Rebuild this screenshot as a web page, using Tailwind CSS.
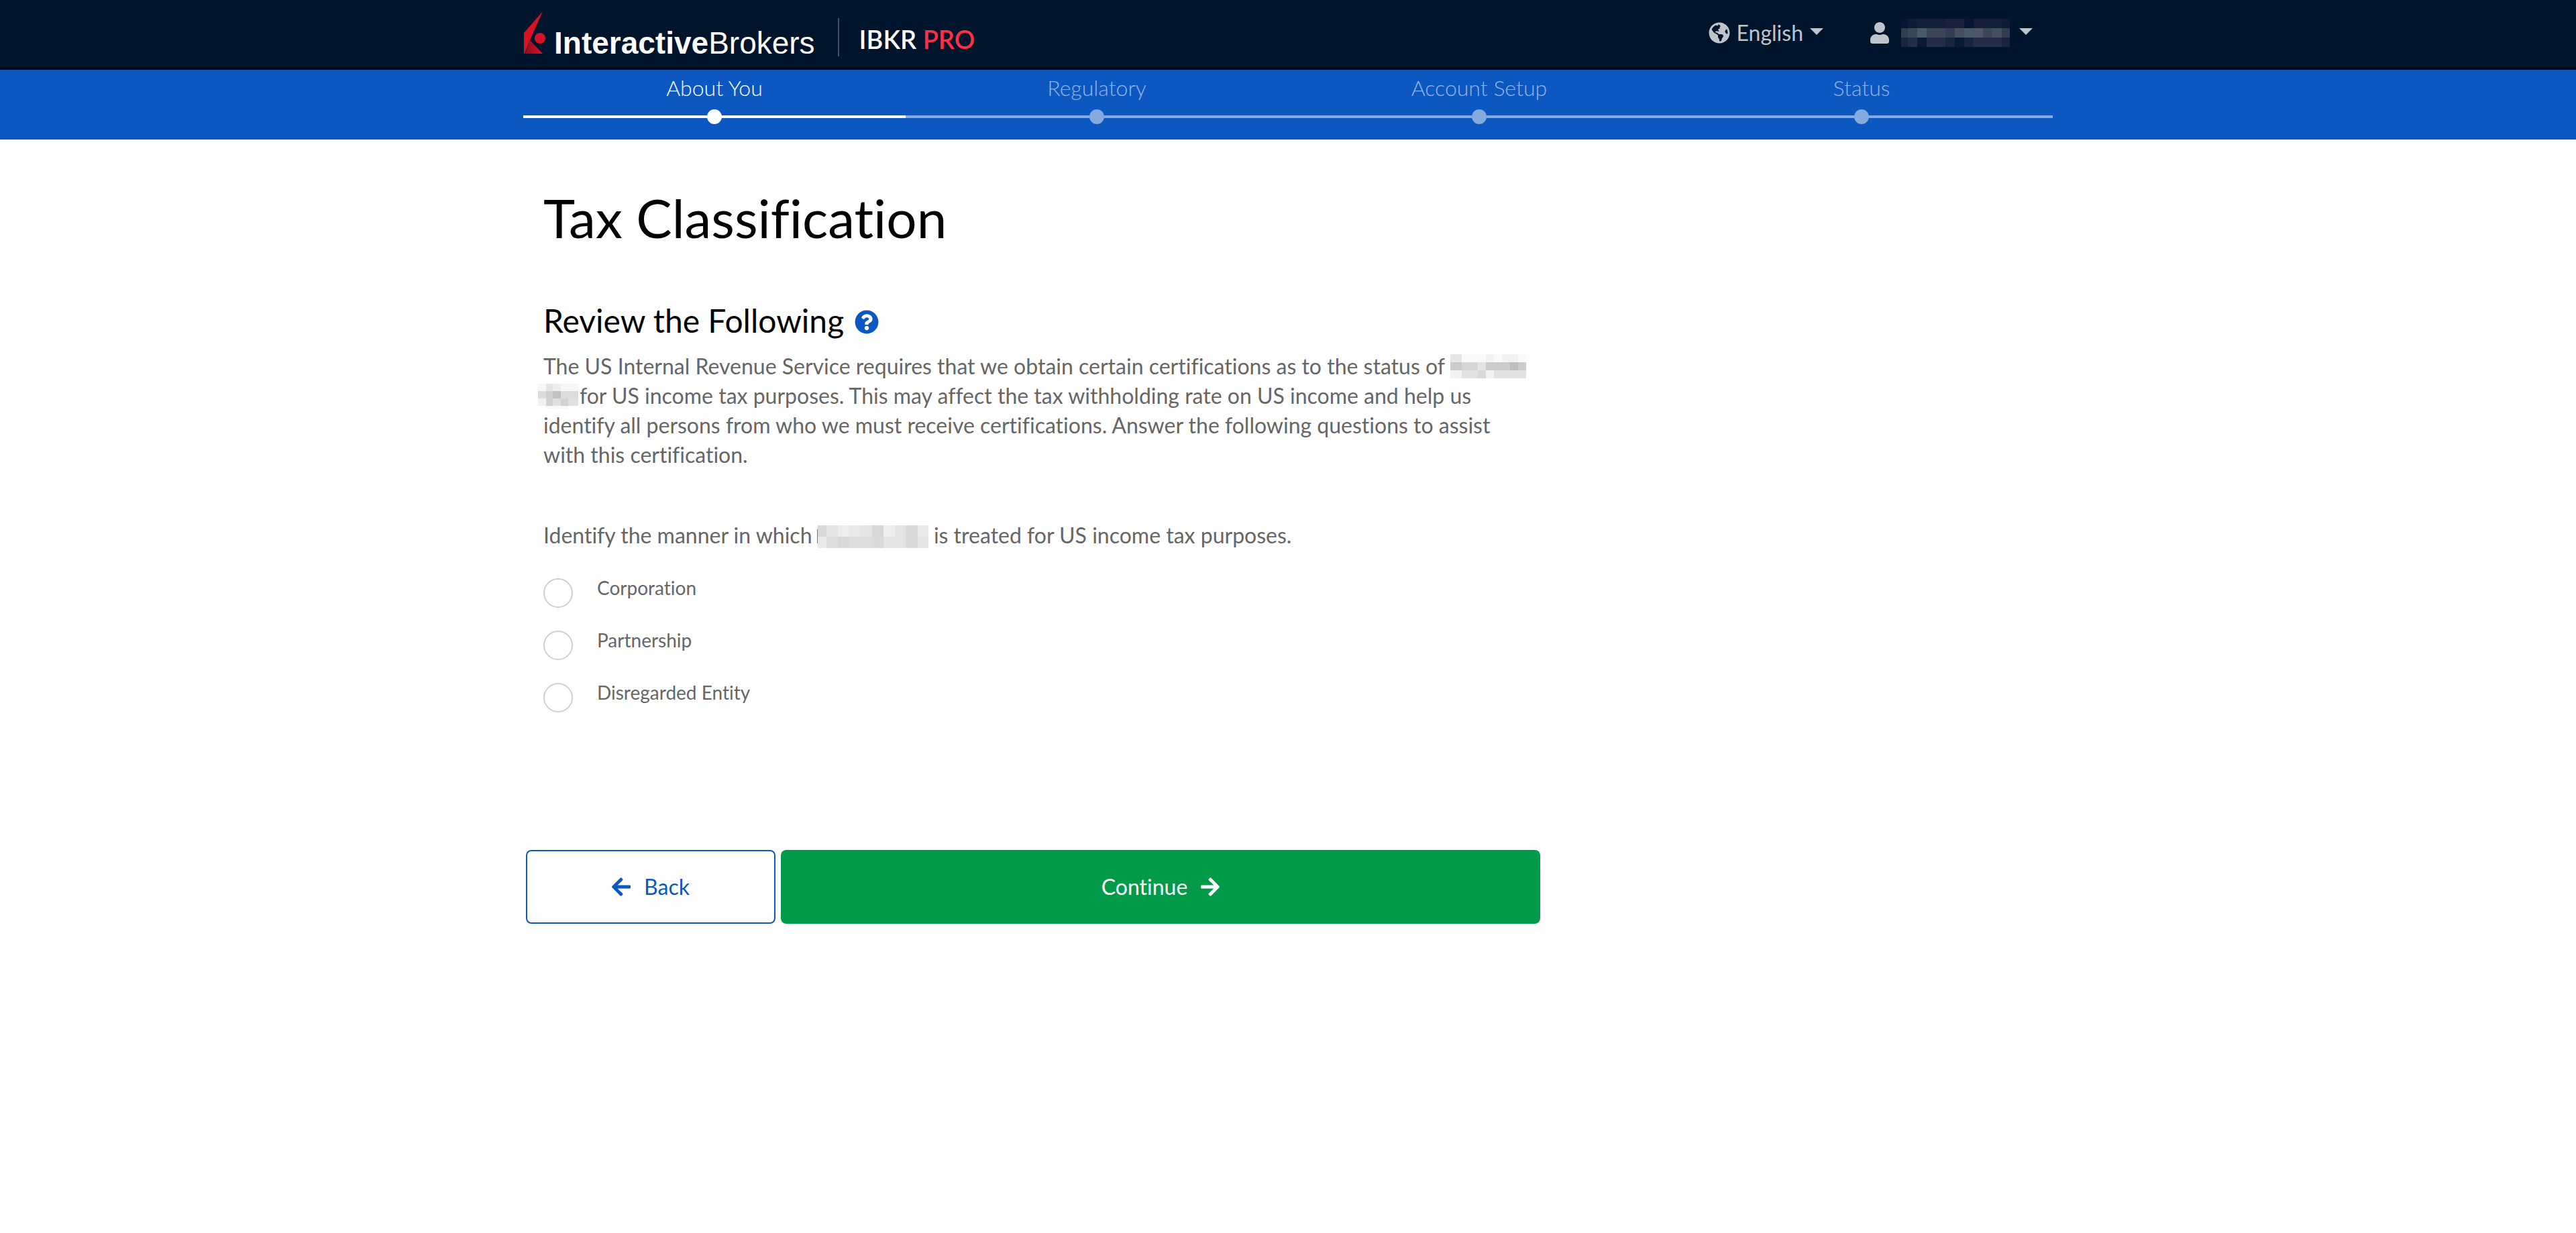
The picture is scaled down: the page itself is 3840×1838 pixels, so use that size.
<!DOCTYPE html>
<html lang="en">
<head>
<meta charset="utf-8">
<meta name="viewport" content="width=device-width, initial-scale=1">
<title>Tax Classification</title>
<script src="https://cdn.jsdelivr.net/npm/@tailwindcss/browser@4"></script>
</head>
<body class="min-h-screen bg-white font-['Lato',sans-serif] text-[32px] leading-[44px] text-[#666666] [font-variant-ligatures:none]">

<header class="border-b-2 border-black bg-[#00142b]">
  <div class="mx-auto flex h-[102px] w-full max-w-[2280px] items-start justify-between pr-[30px]">
    <div class="flex">
      <a href="#" aria-label="Interactive Brokers" class="flex items-baseline gap-3 pt-[17px] font-['Liberation_Sans',sans-serif] text-[46px] leading-[52px] text-white">
        <svg class="h-[63px] w-[34px]" viewBox="0 0 34 63" aria-hidden="true">
          <defs>
            <linearGradient id="fold" x1="0" y1="0" x2="1" y2="0">
              <stop offset="0" stop-color="#8e0f1c"/><stop offset="1" stop-color="#d81222"/>
            </linearGradient>
          </defs>
          <path d="M29 0 10 43 2 63H1V32z" fill="#d81222"/>
          <path d="M10 43 29 63H3z" fill="url(#fold)"/>
          <circle cx="25" cy="40" r="8" fill="#d81222"/>
        </svg>
        <span><b class="font-bold">Interactive</b>Brokers</span>
      </a>
      <div class="mt-[27px] ml-[34px] h-[57px] border-l-2 border-[#475160]"></div>
      <div class="ml-[30px] pt-[34px] text-[38px] leading-[48px] font-semibold text-white">IBKR <span class="text-[#ff2f43]">PRO</span></div>
    </div>
    <nav class="flex h-[98px] items-center gap-[70px] text-[#bfc3ca]">
      <button type="button" aria-haspopup="true" class="flex items-center leading-10">
        <svg class="mr-[10px] h-8 w-8" viewBox="0 0 496 512" fill="currentColor" aria-hidden="true"><path d="M248 8C111.03 8 0 119.03 0 256s111.03 248 248 248 248-111.03 248-248S384.97 8 248 8zm82.29 357.6c-3.9 3.88-7.99 7.95-11.31 11.28-2.99 3-5.1 6.7-6.17 10.71-1.51 5.66-2.73 11.38-4.77 16.87l-17.39 46.85c-13.76 3-28 4.69-42.65 4.69v-27.38c1.69-12.62-7.64-36.26-22.63-51.25-6-6-9.37-14.14-9.37-22.63v-32.01c0-11.64-6.27-22.34-16.46-27.97-14.37-7.95-34.81-19.06-48.81-26.11-11.48-5.78-22.1-13.14-31.65-21.75l-.8-.72a114.792 114.792 0 0 1-18.06-20.74c-9.38-13.77-24.66-36.42-34.59-51.14 20.47-45.5 57.36-82.04 103.2-101.89l24.01 12.01C203.48 89.74 216 82.01 216 70.11v-11.3c7.99-1.29 16.12-2.11 24.39-2.42l28.3 28.3c6.25 6.25 6.25 16.38 0 22.63L264 112l-10.34 10.34c-3.12 3.12-3.12 8.19 0 11.31l4.69 4.69c3.12 3.12 3.12 8.19 0 11.31l-8 8a8.008 8.008 0 0 1-5.66 2.34h-8.99c-2.08 0-4.08.81-5.58 2.27l-9.92 9.65a8.001 8.001 0 0 0-1.58 9.31l15.59 31.19c2.66 5.32-1.21 11.58-7.15 11.58h-5.64c-1.93 0-3.79-.7-5.24-1.96l-9.28-8.06a16.017 16.017 0 0 0-15.55-3.1l-31.17 10.39a11.95 11.95 0 0 0-8.17 11.34c0 4.53 2.56 8.66 6.61 10.69l11.08 5.54c9.41 4.71 19.79 7.16 30.31 7.16s22.59 27.29 32 32h66.75c8.49 0 16.62 3.37 22.63 9.37l13.69 13.69a30.503 30.503 0 0 1 8.93 21.57 46.536 46.536 0 0 1-13.72 32.98zM417 274.25c-5.79-1.45-10.84-5-14.15-9.97l-17.98-26.97a23.97 23.97 0 0 1 0-26.62l19.59-29.38c2.32-3.47 5.5-6.29 9.24-8.15l12.98-6.49C440.2 193.59 448 223.87 448 256c0 8.67-.74 17.16-1.82 25.54L417 274.25z"/></svg>
        <span>English</span>
        <svg class="mb-1 ml-[10px] h-[10px] w-5" viewBox="0 0 20 10" fill="currentColor" aria-hidden="true"><path d="M0 0h20L10 10z"/></svg>
      </button>
      <button type="button" aria-haspopup="true" aria-label="Account" class="flex items-center">
        <svg class="mr-[18px] h-8 w-7" viewBox="0 0 448 512" fill="currentColor" aria-hidden="true"><path d="M224 256c70.7 0 128-57.3 128-128S294.7 0 224 0 96 57.3 96 128s57.3 128 128 128zm89.6 32h-16.7c-22.2 10.2-46.9 16-72.9 16s-50.6-5.8-72.9-16h-16.7C60.2 288 0 348.2 0 422.4V464c0 26.5 21.5 48 48 48h352c26.5 0 48-21.5 48-48v-41.6c0-74.2-60.2-134.4-134.4-134.4z"/></svg>
        <svg class="h-[42px] w-[162px]" viewBox="0 0 162 42" shape-rendering="crispEdges" aria-hidden="true">
          <path fill="#0d1b35" d="M0 0h162v14H0z"/>
          <path fill="#131f39" d="M24 0h42v14H24zM136 0h14v14h-14zM108 0h28v14h-28z"/>
          <path fill="#18223d" d="M66 0h28v14H66z"/>
          <path fill="#0a1631" d="M94 0h14v14H94zM0 0h10v14H0z"/>
          <path fill="#3c4658" d="M0 14h162v14H0z"/>
          <path fill="#323d54" d="M0 14h10v14H0zM66 14h14v14H66zM150 14h12v14h-12z"/>
          <path fill="#4b586b" d="M24 14h14v14H24zM94 14h28v14H94z"/>
          <path fill="#444f60" d="M80 14h14v14H80zM136 14h14v14h-14z"/>
          <path fill="#19243e" d="M0 28h162v14H0z"/>
          <path fill="#222d45" d="M10 28h14v14H10zM38 28h28v14H38zM108 28h42v14h-42z"/>
          <path fill="#0b1a33" d="M24 28h14v14H24zM80 28h14v14H80z"/>
        </svg>
        <svg class="mb-1 ml-[14px] h-[10px] w-5" viewBox="0 0 20 10" fill="currentColor" aria-hidden="true"><path d="M0 0h20L10 10z"/></svg>
      </button>
    </nav>
  </div>
</header>

<div class="bg-[#0c57c0]">
  <ol class="mx-auto grid h-[104px] w-full max-w-[2280px] grid-cols-4 pt-[7px] text-center leading-10 font-light text-[#94b5e4]">
    <li class="text-white" aria-current="step">
      <span>About You</span>
      <div class="mt-3 flex items-center"><i class="h-1 flex-1 bg-white"></i><i class="size-[22px] rounded-full bg-white"></i><i class="h-1 flex-1 bg-white"></i></div>
    </li>
    <li>
      <span>Regulatory</span>
      <div class="mt-3 flex items-center"><i class="h-1 flex-1 bg-[#85aadf]"></i><i class="size-[22px] rounded-full bg-[#85aadf]"></i><i class="h-1 flex-1 bg-[#85aadf]"></i></div>
    </li>
    <li>
      <span>Account Setup</span>
      <div class="mt-3 flex items-center"><i class="h-1 flex-1 bg-[#85aadf]"></i><i class="size-[22px] rounded-full bg-[#85aadf]"></i><i class="h-1 flex-1 bg-[#85aadf]"></i></div>
    </li>
    <li>
      <span>Status</span>
      <div class="mt-3 flex items-center"><i class="h-1 flex-1 bg-[#85aadf]"></i><i class="size-[22px] rounded-full bg-[#85aadf]"></i><i class="h-1 flex-1 bg-[#85aadf]"></i></div>
    </li>
  </ol>
</div>

<main class="mx-auto w-full max-w-[2280px]">
  <form class="max-w-[1520px]">
    <div class="px-[30px] pt-[68px]">
      <h1 class="text-[80px] leading-[96px] text-black">Tax Classification</h1>
      <div class="mt-[77px] flex items-center gap-4">
        <h2 class="text-5xl leading-[58px] text-black">Review the Following</h2>
        <button type="button" aria-label="Help" class="text-[#0c57c0]">
          <svg class="mt-1 size-9" viewBox="0 0 512 512" fill="currentColor" aria-hidden="true"><path d="M504 256c0 136.997-111.043 248-248 248S8 392.997 8 256C8 119.083 119.043 8 256 8s248 111.083 248 248zM262.655 90c-54.497 0-89.255 22.957-116.549 63.758-3.536 5.286-2.353 12.415 2.715 16.258l34.699 26.31c5.205 3.947 12.621 3.008 16.665-2.122 17.864-22.658 30.113-35.797 57.303-35.797 20.429 0 45.698 13.148 45.698 32.958 0 14.976-12.363 22.667-32.534 33.976C247.128 238.528 216 254.941 216 296v4c0 6.627 5.373 12 12 12h56c6.627 0 12-5.373 12-12v-1.333c0-28.462 83.186-29.647 83.186-106.667 0-58.002-60.165-102-116.531-102zM256 338c-25.365 0-46 20.635-46 46 0 25.364 20.635 46 46 46s46-20.636 46-46c0-25.365-20.635-46-46-46z"/></svg>
        </button>
      </div>
      <p class="mt-[17px] -mr-[20px]">The US Internal Revenue Service requires that we obtain certain certifications as to the status of
        <svg class="inline-block h-9 w-[113px] align-[-6px]" viewBox="0 0 113 36" shape-rendering="crispEdges" aria-hidden="true">
          <path fill="#fafafa" d="M0 0h113v12H0z"/>
          <path fill="#e6e6e6" d="M0 0h17v12H0z"/>
          <path fill="#f2f2f2" d="M53 0h12v12H53zM77 0h24v12H77z"/>
          <path fill="#cccccc" d="M0 12h113v12H0z"/>
          <path fill="#d6d6d6" d="M17 12h24v12H17z"/>
          <path fill="#e4e4e4" d="M41 12h12v12H41z"/>
          <path fill="#bebebe" d="M89 12h12v12H89z"/>
          <path fill="#e2e2e2" d="M0 24h113v12H0z"/>
          <path fill="#f2f2f2" d="M0 24h17v12H0zM53 24h12v12H53z"/>
          <path fill="#d8d8d8" d="M41 24h12v12H41z"/>
        </svg><br>
        <svg class="mr-[2px] -ml-2 inline-block h-[38px] w-[60px] align-[-8px]" viewBox="0 0 60 38" shape-rendering="crispEdges" aria-hidden="true">
          <path fill="#f7f7f7" d="M0 0h60v11H0z"/>
          <path fill="#e4e4e4" d="M12 0h10v11H12z"/>
          <path fill="#eeeeee" d="M22 0h12v11H22z"/>
          <path fill="#dcdcdc" d="M0 11h60v11H0z"/>
          <path fill="#d0d0d0" d="M12 11h10v11H12z"/>
          <path fill="#c2c2c2" d="M22 11h12v11H22z"/>
          <path fill="#e0e0e0" d="M0 22h60v11H0z"/>
          <path fill="#f1f1f1" d="M0 22h12v11H0z"/>
          <path fill="#d2d2d2" d="M12 22h10v11H12zM34 22h11v11H34z"/>
          <path fill="#f8f8f8" d="M12 33h33v4H12z"/>
        </svg>for US income tax purposes. This may affect the tax withholding rate on US income and help us<br>
        identify all persons from who we must receive certifications. Answer the following questions to assist<br>
        with this certification.</p>

      <fieldset class="mt-[76px]">
        <legend>Identify the manner in which
          <svg class="-ml-px inline-block h-[34px] w-[166px] align-[-7px]" viewBox="0 0 166 34" shape-rendering="crispEdges" aria-hidden="true">
            <path fill="#777777" d="M0 6h1v21H0z"/>
            <path fill="#e4e4e4" d="M1 0h165v34H1z"/>
            <path fill="#d9d9d9" d="M1 0h13v17H1zM82 0h17v17H82zM133 0h17v17h-17zM31 17h17v17H31zM82 17h17v17H82zM133 17h17v17h-17z"/>
            <path fill="#eeeeee" d="M31 0h17v17H31zM99 0h17v17H99z"/>
            <path fill="#e9e9e9" d="M48 0h17v17H48zM150 0h16v17h-16zM1 17h13v17H1z"/>
            <path fill="#dddddd" d="M14 17h17v17H14zM48 17h34v17H48z"/>
          </svg>
          is treated for US income tax purposes.</legend>
        <div class="mt-[39px] flex flex-col gap-[31px] text-[28px] leading-[34px]">
          <label class="flex items-start gap-9">
            <input type="radio" name="treatment" class="mt-[3px] size-11 appearance-none rounded-full border-2 border-[#d3cec9] bg-white checked:border-[14px] checked:border-[#0c57c0]">
            <span>Corporation</span>
          </label>
          <label class="flex items-start gap-9">
            <input type="radio" name="treatment" class="mt-[3px] size-11 appearance-none rounded-full border-2 border-[#d3cec9] bg-white checked:border-[14px] checked:border-[#0c57c0]">
            <span>Partnership</span>
          </label>
          <label class="flex items-start gap-9">
            <input type="radio" name="treatment" class="mt-[3px] size-11 appearance-none rounded-full border-2 border-[#d3cec9] bg-white checked:border-[14px] checked:border-[#0c57c0]">
            <span>Disregarded Entity</span>
          </label>
        </div>
      </fieldset>
    </div>

    <div class="mt-[205px] flex h-[110px] gap-2 px-1">
      <button type="button" class="flex w-[372px] items-center justify-center gap-5 rounded-lg border-2 border-[#0c57c0] text-[#0c57c0]">
        <svg class="h-8 w-7" viewBox="0 0 448 512" fill="currentColor" aria-hidden="true"><path d="M257.5 445.1l-22.2 22.2c-9.4 9.4-24.6 9.4-33.9 0L7 273c-9.4-9.4-9.4-24.6 0-33.9L201.4 44.7c9.4-9.4 24.6-9.4 33.9 0l22.2 22.2c9.5 9.5 9.3 25-.4 34.3L136.6 216H424c13.3 0 24 10.7 24 24v32c0 13.3-10.7 24-24 24H136.6l120.5 114.8c9.8 9.3 10 24.8.4 34.3z"/></svg>
        <span>Back</span>
      </button>
      <button type="submit" class="flex flex-1 items-center justify-center gap-5 rounded-lg bg-[#009a48] text-white">
        <span>Continue</span>
        <svg class="h-8 w-7" viewBox="0 0 448 512" fill="currentColor" aria-hidden="true"><path d="M190.5 66.900l22.200-22.200c9.400-9.400 24.600-9.400 33.900 0L441 239c9.400 9.400 9.400 24.600 0 33.900L246.600 467.300c-9.400 9.400-24.600 9.400-33.900 0l-22.200-22.200c-9.500-9.500-9.300-25 .4-34.300L311.400 296H24c-13.300 0-24-10.700-24-24v-32c0-13.300 10.700-24 24-24h287.400L190.900 101.200c-9.800-9.300-10-24.800-.4-34.300z"/></svg>
      </button>
    </div>
  </form>
</main>
</body>
</html>
